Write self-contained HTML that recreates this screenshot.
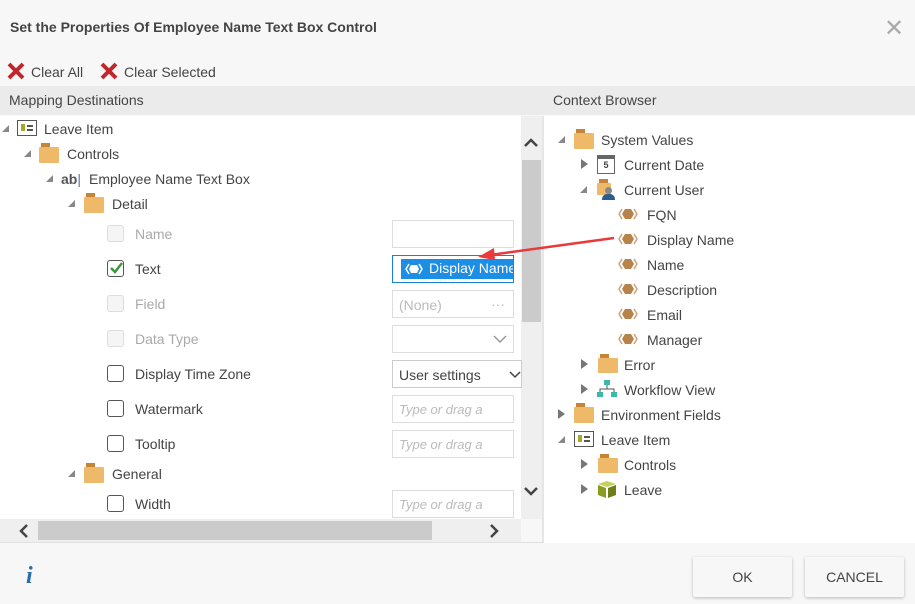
<!DOCTYPE html>
<html><head><meta charset="utf-8"><style>
*{box-sizing:border-box;margin:0;padding:0}
body{width:915px;height:604px;background:#f7f7f7;font-family:"Liberation Sans",sans-serif;color:#444;font-size:14px;position:relative;overflow:hidden}
.a{position:absolute;white-space:nowrap}
.tri{position:absolute;width:0;height:0}
.dn{border-left:7px solid transparent;border-bottom:7px solid #888;}
.rt{border-top:5px solid transparent;border-bottom:5px solid transparent;border-left:7px solid #777}
.fold{position:absolute;width:20px;height:15px;background:#efb96a;border-radius:1px}
.fold:before{content:"";position:absolute;left:2px;top:-4px;width:9px;height:4px;background:#c68436}
.cb{position:absolute;width:17px;height:17px;border:1.5px solid #555;border-radius:3px;background:#fff}
.cbd{border:1px solid #ddd;background:#f5f5f5}
.inp{position:absolute;width:122px;height:28px;border:1px solid #ddd;background:#fff;font-size:13px;color:#bbb;padding:6px 6px;font-style:italic}
.lab{position:absolute;font-size:14px;color:#444}
.dis{color:#aaa}
</style></head><body>
<div class="a" style="left:10px;top:19px;font-weight:bold;font-size:14px;color:#444">Set the Properties Of Employee Name Text Box Control</div>
<div class="a" style="left:884px;top:14px;font-size:24px;color:#aaa">✕</div>
<svg class="a" style="left:6px;top:62px" width="20" height="18"><path d="M3 2L17 16M17 2L3 16" stroke="#c0272d" stroke-width="4"/></svg>
<div class="a" style="left:31px;top:64px">Clear All</div>
<svg class="a" style="left:99px;top:62px" width="20" height="18"><path d="M3 2L17 16M17 2L3 16" stroke="#c0272d" stroke-width="4"/></svg>
<div class="a" style="left:124px;top:64px">Clear Selected</div>
<div class="a" style="left:0;top:86px;width:915px;height:29px;background:#ebebeb"></div>
<div class="a" style="left:9px;top:92px">Mapping Destinations</div>
<div class="a" style="left:553px;top:92px">Context Browser</div>
<div class="a" style="left:0;top:116px;width:521px;height:403px;background:#fff"></div>
<div class="a" style="left:521px;top:116px;width:21px;height:403px;background:#efefef"></div>
<div class="a" style="left:522px;top:160px;width:19px;height:162px;background:#cbcbcb"></div>
<svg class="a" style="left:523px;top:136px" width="16" height="12"><path d="M2 10L8 4L14 10" stroke="#444" stroke-width="2.5" fill="none"/></svg>
<svg class="a" style="left:523px;top:486px" width="16" height="12"><path d="M2 2L8 8L14 2" stroke="#444" stroke-width="2.5" fill="none"/></svg>
<div class="a" style="left:0;top:519px;width:521px;height:23px;background:#efefef"></div>
<div class="a" style="left:38px;top:521px;width:394px;height:19px;background:#cbcbcb"></div>
<svg class="a" style="left:18px;top:523px" width="12" height="16"><path d="M9 2L3 8L9 14" stroke="#444" stroke-width="2.5" fill="none"/></svg>
<svg class="a" style="left:488px;top:523px" width="12" height="16"><path d="M3 2L9 8L3 14" stroke="#444" stroke-width="2.5" fill="none"/></svg>
<div class="a" style="left:542px;top:116px;width:2px;height:427px;background:#e6e6e6"></div>
<div class="a" style="left:0;top:542px;width:544px;height:1px;background:#e0e0e0"></div>

<div class="tri dn" style="left:2px;top:125px"></div>
<div class="a" style="left:17px;top:120px;width:20px;height:16px;border:1.5px solid #555;background:#fff"><div class="a" style="left:3px;top:3px;width:4px;height:7px;background:#a5a82a"></div><div class="a" style="left:9px;top:4px;width:6px;height:2px;background:#555"></div><div class="a" style="left:9px;top:8px;width:6px;height:2px;background:#555"></div></div>
<div class="lab" style="left:44px;top:121px">Leave Item</div>
<div class="tri dn" style="left:24px;top:150px"></div>
<div class="fold" style="left:39px;top:147px;height:16px"></div>
<div class="lab" style="left:67px;top:146px">Controls</div>
<div class="tri dn" style="left:46px;top:175px"></div>
<div class="a" style="left:61px;top:171px;font-weight:bold;font-size:14px;color:#555">ab<span style="color:#4a7aa8;font-weight:normal">|</span></div>
<div class="lab" style="left:89px;top:171px">Employee Name Text Box</div>
<div class="tri dn" style="left:68px;top:200px"></div>
<div class="fold" style="left:84px;top:197px;height:16px"></div>
<div class="lab" style="left:112px;top:196px">Detail</div>

<div class="cb cbd" style="left:107px;top:225px"></div><div class="lab dis" style="left:135px;top:226px">Name</div>
<div class="inp" style="left:392px;top:220px"></div>
<div class="cb" style="left:107px;top:260px"><svg class="a" style="left:1px;top:0" width="14" height="14"><path d="M2 7L6 11L13 2" stroke="#3a9a3a" stroke-width="2.5" fill="none"/></svg></div>
<div class="lab" style="left:135px;top:261px">Text</div>
<div class="a" style="left:392px;top:255px;width:122px;height:28px;border:1px solid #1a7fd6;background:#fff;overflow:hidden"><div class="a" style="left:8px;top:3px;width:120px;height:20px;background:#1d8ee6;color:#fff;padding:1px 0 0 28px;font-size:14px">Display Name</div><svg class="a" style="left:12px;top:7px" width="18" height="12"><path d="M4 1L1 6L4 11M14 1L17 6L14 11" stroke="#fff" stroke-width="1.5" fill="none"/><path d="M6 2L12 2L14 6L12 10L6 10L4 6Z" fill="#fff"/></svg></div>
<div class="cb cbd" style="left:107px;top:295px"></div><div class="lab dis" style="left:135px;top:296px">Field</div>
<div class="inp" style="left:392px;top:290px;font-style:normal;color:#bbb;font-size:14px">(None)<span style="position:absolute;right:8px;top:5px">···</span></div>
<div class="cb cbd" style="left:107px;top:330px"></div><div class="lab dis" style="left:135px;top:331px">Data Type</div>
<div class="inp" style="left:392px;top:325px"><svg class="a" style="left:100px;top:8px" width="14" height="10"><path d="M1 2L7 8L13 2" stroke="#999" stroke-width="1.5" fill="none"/></svg></div>
<div class="cb" style="left:107px;top:365px"></div><div class="lab" style="left:135px;top:366px">Display Time Zone</div>
<div class="inp" style="left:392px;top:360px;width:130px;font-style:normal;color:#444;font-size:14px;border-color:#ccc">User settings<svg class="a" style="left:116px;top:9px" width="12" height="10"><path d="M1 2L6 7L11 2" stroke="#444" stroke-width="1.5" fill="none"/></svg></div>
<div class="cb" style="left:107px;top:400px"></div><div class="lab" style="left:135px;top:401px">Watermark</div>
<div class="inp" style="left:392px;top:395px">Type or drag a</div>
<div class="cb" style="left:107px;top:435px"></div><div class="lab" style="left:135px;top:436px">Tooltip</div>
<div class="inp" style="left:392px;top:430px">Type or drag a</div>
<div class="tri dn" style="left:68px;top:470px"></div>
<div class="fold" style="left:84px;top:467px;height:16px"></div>
<div class="lab" style="left:112px;top:466px">General</div>
<div class="cb" style="left:107px;top:495px"></div><div class="lab" style="left:135px;top:496px">Width</div>
<div class="inp" style="left:392px;top:490px">Type or drag a</div>

<div class="a" style="left:544px;top:116px;width:371px;height:427px;background:#fff"></div>
<div class="tri dn" style="left:558px;top:136px"></div>
<div class="fold" style="left:574px;top:133px;height:16px"></div>
<div class="lab" style="left:601px;top:132px">System Values</div>
<div class="tri rt" style="left:581px;top:159px"></div>
<div class="a" style="left:597px;top:155px;width:18px;height:19px;border:1.5px solid #666;background:#fff;border-top-width:4px;font-size:9px;text-align:center;line-height:13px;font-weight:bold">5</div>
<div class="lab" style="left:624px;top:157px">Current Date</div>
<div class="tri dn" style="left:580px;top:186px"></div>
<div class="fold" style="left:597px;top:183px;width:14px;height:12px"></div>
<div class="a" style="left:605px;top:187px;width:7px;height:7px;border-radius:50%;background:#888"></div>
<div class="a" style="left:602px;top:194px;width:13px;height:6px;border-radius:5px 5px 0 0;background:#2b5e8e"></div>
<div class="lab" style="left:624px;top:182px">Current User</div>
<div class="lab" style="left:647px;top:207px">FQN</div>
<div class="lab" style="left:647px;top:232px">Display Name</div>
<div class="lab" style="left:647px;top:257px">Name</div>
<div class="lab" style="left:647px;top:282px">Description</div>
<div class="lab" style="left:647px;top:307px">Email</div>
<div class="lab" style="left:647px;top:332px">Manager</div>
<svg class="a" style="left:618px;top:207px" width="22" height="140">
<g id="v"><path d="M4 2L1 7L4 12M16 2L19 7L16 12" stroke="#c9a57a" stroke-width="1.5" fill="none"/><path d="M7 2L13 2L16 7L13 12L7 12L4 7Z" fill="#b8834a"/></g>
<use href="#v" y="25"/><use href="#v" y="50"/><use href="#v" y="75"/><use href="#v" y="100"/><use href="#v" y="125"/>
</svg>
<div class="tri rt" style="left:581px;top:359px"></div>
<div class="fold" style="left:598px;top:358px;height:15px"></div>
<div class="lab" style="left:624px;top:357px">Error</div>
<div class="tri rt" style="left:581px;top:384px"></div>
<svg class="a" style="left:597px;top:380px" width="20" height="18"><rect x="7" y="0" width="6" height="5" fill="#3cb8a8"/><rect x="0" y="12" width="6" height="5" fill="#3cb8a8"/><rect x="14" y="12" width="6" height="5" fill="#3cb8a8"/><path d="M10 5V9M3 12V9H17V12" stroke="#555" fill="none"/></svg>
<div class="lab" style="left:624px;top:382px">Workflow View</div>
<div class="tri rt" style="left:558px;top:409px"></div>
<div class="fold" style="left:574px;top:407px;height:16px"></div>
<div class="lab" style="left:601px;top:407px">Environment Fields</div>
<div class="tri dn" style="left:558px;top:436px"></div>
<div class="a" style="left:574px;top:431px;width:20px;height:16px;border:1.5px solid #555;background:#fff"><div class="a" style="left:3px;top:3px;width:4px;height:7px;background:#a5a82a"></div><div class="a" style="left:9px;top:4px;width:6px;height:2px;background:#555"></div><div class="a" style="left:9px;top:8px;width:6px;height:2px;background:#555"></div></div>
<div class="lab" style="left:601px;top:432px">Leave Item</div>
<div class="tri rt" style="left:581px;top:459px"></div>
<div class="fold" style="left:598px;top:458px;height:15px"></div>
<div class="lab" style="left:624px;top:457px">Controls</div>
<div class="tri rt" style="left:581px;top:484px"></div>
<svg class="a" style="left:597px;top:480px" width="20" height="19"><path d="M1 4L10 1L19 4L10 7Z" fill="#c8cf5a"/><path d="M1 5L9 8V18L1 15Z" fill="#8a9a22"/><path d="M19 5L11 8V18L19 15Z" fill="#6f7e18"/></svg>
<div class="lab" style="left:624px;top:482px">Leave</div>

<svg class="a" style="left:470px;top:230px" width="150" height="35"><path d="M144 8L20 25" stroke="#e83a3a" stroke-width="2.5"/><path d="M8 27L24 18L25 30Z" fill="#e83a3a"/></svg>

<div class="a" style="left:26px;top:563px;font-family:'Liberation Serif',serif;font-style:italic;font-weight:bold;font-size:24px;color:#2b6ea8">i</div>
<div class="a" style="left:693px;top:557px;width:99px;height:40px;background:#f7f7f7;box-shadow:0 1px 3px rgba(0,0,0,.25);border-radius:2px;text-align:center;line-height:40px;font-size:14px">OK</div>
<div class="a" style="left:805px;top:557px;width:99px;height:40px;background:#f7f7f7;box-shadow:0 1px 3px rgba(0,0,0,.25);border-radius:2px;text-align:center;line-height:40px;font-size:14px">CANCEL</div>
</body></html>
